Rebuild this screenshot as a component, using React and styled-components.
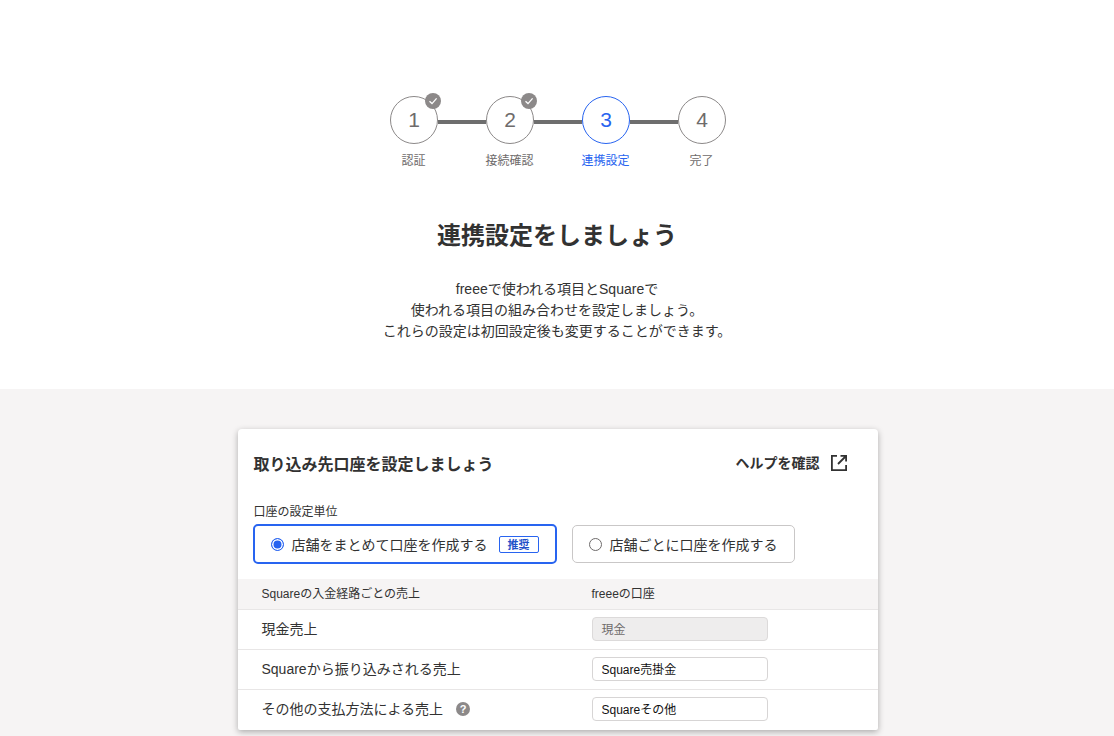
import React from "react";
import styled, { createGlobalStyle } from "styled-components";

const FONT = `"Liberation Sans", "Noto Sans CJK JP", sans-serif`;

const steps = [
  { no: 1, label: "認証", done: true },
  { no: 2, label: "接続確認", done: true },
  { no: 3, label: "連携設定", current: true },
  { no: 4, label: "完了" },
];

const rows = [
  { name: "現金売上", value: "現金", disabled: true },
  { name: "Squareから振り込みされる売上", value: "Square売掛金" },
  { name: "その他の支払方法による売上", value: "Squareその他", help: true },
];

function App() {
  return (
    <Page>
      <GlobalStyle />
      <Top>
        <Stepper>
          {steps.map((s, i) => (
            <Step key={s.no} $last={i === steps.length - 1}>
              <Circle $current={s.current}>
                {s.no}
                {s.done && (
                  <Check>
                    <svg width="10" height="10" viewBox="0 0 10 10" fill="none">
                      <path d="M1.5 5.3 L4 7.6 L8.6 2.4" stroke="#fff" strokeWidth="1.3" />
                    </svg>
                  </Check>
                )}
              </Circle>
              <StepLabel $current={s.current}>{s.label}</StepLabel>
            </Step>
          ))}
        </Stepper>
        <Title>連携設定をしましょう</Title>
        <Lead>
          freeeで使われる項目とSquareで
          <br />
          使われる項目の組み合わせを設定しましょう。
          <br />
          これらの設定は初回設定後も変更することができます。
        </Lead>
      </Top>
      <Bottom>
        <Card>
          <CardHead>
            <CardTitle>取り込み先口座を設定しましょう</CardTitle>
            <HelpLink>
              ヘルプを確認
              <svg width="18" height="18" viewBox="0 0 18 18" fill="none" stroke="#323232" strokeWidth="1.8">
                <path d="M7 1.9 H1.9 V16.1 H16.1 V11" />
                <path d="M10.5 1.9 H16.1 V7.5 M16 2 L8 10" />
              </svg>
            </HelpLink>
          </CardHead>
          <FieldLabel>口座の設定単位</FieldLabel>
          <Options>
            <Option $checked>
              <Radio $checked />
              店舗をまとめて口座を作成する
              <Badge>推奨</Badge>
            </Option>
            <Option>
              <Radio />
              店舗ごとに口座を作成する
            </Option>
          </Options>
          <HeadRow>
            <NameCell $head>Squareの入金経路ごとの売上</NameCell>
            <HeadCell>freeeの口座</HeadCell>
          </HeadRow>
          {rows.map((r) => (
            <Row key={r.name}>
              <NameCell>
                {r.name}
                {r.help && <HelpMark>?</HelpMark>}
              </NameCell>
              <Select $disabled={r.disabled}>{r.value}</Select>
            </Row>
          ))}
        </Card>
      </Bottom>
    </Page>
  );
}

const GlobalStyle = createGlobalStyle`
  html, body {
    margin: 0;
    padding: 0;
    height: 736px;
    overflow: hidden;
    background: #fff;
  }
  * {
    box-sizing: border-box;
  }
`;

const Page = styled.div`
  font-family: ${FONT};
  color: #323232;
`;

const Top = styled.div`
  height: 389px;
  padding-top: 96px;
  text-align: center;
`;

const Stepper = styled.div`
  display: flex;
  justify-content: center;
  margin-left: 2px;
`;

const Step = styled.div`
  position: relative;
  width: 96px;
  display: flex;
  flex-direction: column;
  align-items: center;

  &::after {
    content: "";
    display: ${(p) => (p.$last ? "none" : "block")};
    position: absolute;
    top: 24px;
    left: 72px;
    width: 48px;
    height: 4px;
    background: #6e6e6e;
  }
`;

const Circle = styled.div`
  position: relative;
  width: 48px;
  height: 48px;
  border-radius: 50%;
  border: 1px solid ${(p) => (p.$current ? "#2864f0" : "#8c8989")};
  color: ${(p) => (p.$current ? "#2864f0" : "#6e6b6b")};
  background: #fff;
  display: flex;
  align-items: center;
  justify-content: center;
  font-size: 21px;
`;

const Check = styled.span`
  position: absolute;
  top: -4px;
  right: -4px;
  width: 16px;
  height: 16px;
  border-radius: 50%;
  background: #8c8989;
  display: flex;
  align-items: center;
  justify-content: center;
`;

const StepLabel = styled.div`
  margin-top: 8px;
  margin-right: 1px;
  font-size: 12px;
  line-height: 18px;
  color: ${(p) => (p.$current ? "#2864f0" : "#6e6b6b")};
`;

const Title = styled.h1`
  margin: 48px 0 0;
  font-size: 24px;
  line-height: 36px;
  font-weight: 700;
`;

const Lead = styled.p`
  margin: 25px 0 0;
  font-size: 14px;
  line-height: 21px;
`;

const Bottom = styled.div`
  height: 347px;
  background: #f6f4f4;
  padding-top: 40px;
  padding-left: 1px;
  display: flex;
  justify-content: center;
`;

const Card = styled.div`
  width: 640px;
  height: 301px;
  background: #fff;
  border-radius: 4px 4px 2px 2px;
  box-shadow: 0 2px 6px rgba(0, 0, 0, 0.3);
`;

const CardHead = styled.div`
  display: flex;
  justify-content: space-between;
  align-items: flex-start;
  padding: 25px 30px 0 16px;
  height: 75px;
`;

const CardTitle = styled.h2`
  margin: 0;
  font-size: 16px;
  line-height: 22px;
  font-weight: 700;
`;

const HelpLink = styled.a`
  display: flex;
  align-items: center;
  gap: 10px;
  font-size: 14px;
  line-height: 18px;
  font-weight: 700;
`;

const FieldLabel = styled.div`
  padding-left: 16px;
  font-size: 12px;
  line-height: 16px;
`;

const Options = styled.div`
  display: flex;
  gap: 15px;
  padding: 4px 0 0 15px;
  height: 59px;
  align-items: flex-start;
`;

const Option = styled.label`
  display: flex;
  align-items: center;
  padding: 0 16px;
  margin-top: ${(p) => (p.$checked ? "0" : "1px")};
  height: ${(p) => (p.$checked ? "40px" : "38px")};
  border-radius: 5px;
  border: ${(p) => (p.$checked ? "2px solid #2864f0" : "1px solid #c9c7c7")};
  font-size: 14px;
  color: #323232;
`;

const Radio = styled.span`
  width: 13px;
  height: 13px;
  border-radius: 50%;
  margin-right: 8px;
  border: 1px solid ${(p) => (p.$checked ? "#2864f0" : "#6e6b6b")};
  background: ${(p) => (p.$checked ? "#2864f0" : "#fff")};
  box-shadow: ${(p) => (p.$checked ? "inset 0 0 0 1.5px #fff" : "none")};
`;

const Badge = styled.span`
  margin-left: 11px;
  width: 40px;
  height: 17px;
  border: 1px solid #2864f0;
  border-radius: 2px;
  color: #1e50c8;
  font-size: 11px;
  font-weight: 700;
  display: flex;
  align-items: center;
  justify-content: center;
`;

const HeadRow = styled.div`
  display: grid;
  grid-template-columns: 354px 1fr;
  align-items: center;
  height: 31px;
  background: #f6f4f4;
  border-bottom: 1px solid #e8e6e6;
`;

const HeadCell = styled.span`
  font-size: 12px;
  padding-bottom: 3px;
`;

const Row = styled.div`
  display: grid;
  grid-template-columns: 354px 1fr;
  align-items: center;
  height: 40px;
  padding-bottom: 1px;
  border-bottom: 1px solid #e8e6e6;

  &:last-child {
    border-bottom: none;
    padding-bottom: 2px;
  }
`;

const NameCell = styled.div`
  padding: 0 0 3px 24px;
  display: flex;
  align-items: center;
  font-size: ${(p) => (p.$head ? "12px" : "14px")};
`;

const HelpMark = styled.span`
  margin: 2px 0 0 13px;
  width: 14px;
  height: 14px;
  border-radius: 50%;
  background: #8c8989;
  color: #fff;
  font-size: 11px;
  font-weight: 700;
  display: flex;
  align-items: center;
  justify-content: center;
`;

const Select = styled.div`
  width: 176px;
  height: 24px;
  padding: 0 0 1px 9px;
  border-radius: 4px;
  border: 1px solid ${(p) => (p.$disabled ? "#dcdada" : "#d7d5d5")};
  background: ${(p) => (p.$disabled ? "#eeeded" : "#fff")};
  color: ${(p) => (p.$disabled ? "#6e6b6b" : "#111")};
  font-size: 12px;
  display: flex;
  align-items: center;
`;

export default App;
